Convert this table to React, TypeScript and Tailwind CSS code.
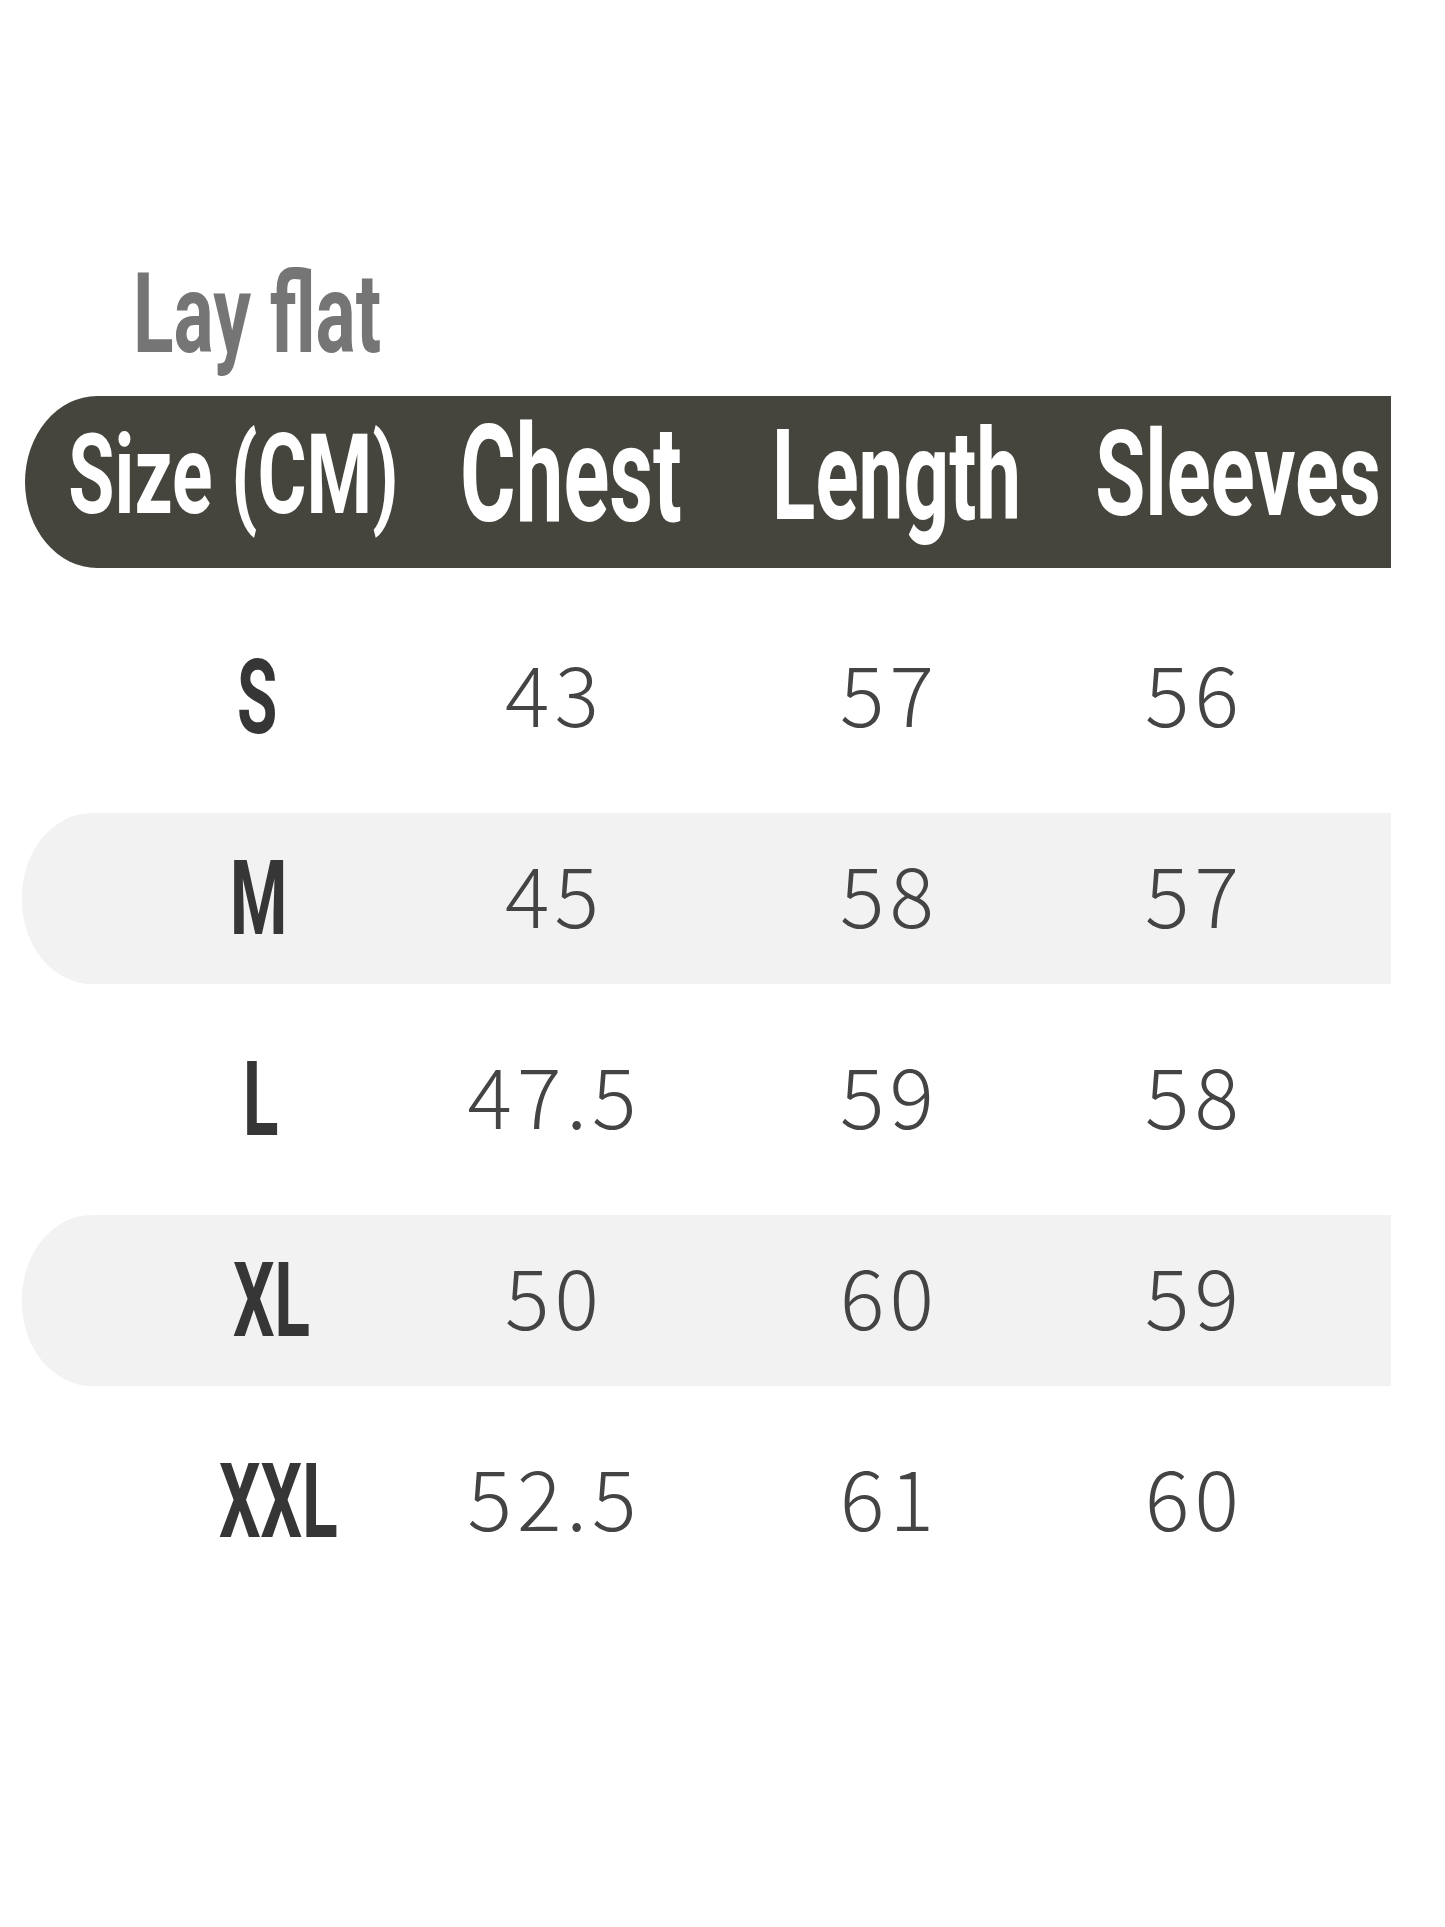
const HEAD_FONT = "font-['Roboto','Liberation_Sans',sans-serif] font-bold";
const NUM_FONT = "font-['Noto_Sans_CJK_SC','Noto_Sans',sans-serif] font-light";

interface Row {
  size: string;
  offset: string;
  chest: string;
  length: string;
  sleeves: string;
}

const ROWS: Row[] = [
  { size: "S", offset: "ml-[117px]", chest: "43", length: "57", sleeves: "56" },
  { size: "M", offset: "ml-[110px]", chest: "45", length: "58", sleeves: "57" },
  { size: "L", offset: "ml-[123px]", chest: "47.5", length: "59", sleeves: "58" },
  { size: "XL", offset: "ml-[113px]", chest: "50", length: "60", sleeves: "59" },
  { size: "XXL", offset: "ml-[99px]", chest: "52.5", length: "61", sleeves: "60" },
];

function HeadCell({ width, margin, size, scale, label }: { width: string; margin: string; size: string; scale: string; label: string }) {
  return (
    <div className={`${width} ${margin} flex justify-center shrink-0`}>
      <span className={`${HEAD_FONT} ${size} ${scale} inline-block leading-none whitespace-nowrap text-white`}>{label}</span>
    </div>
  );
}

export default function App() {
  return (
    <div className="w-[1445px] h-[1927px] bg-white overflow-hidden">
      {/* title */}
      <div className="pt-[258px] pl-[133px]">
        <span className={`${HEAD_FONT} inline-block origin-left scale-x-[0.67] text-[112px] leading-none text-[#757575] whitespace-nowrap`}>
          Lay flat
        </span>
      </div>

      {/* header bar */}
      <div className="mt-[26px] ml-[25px] w-[1366px] h-[172px] bg-[#45443d] rounded-l-[72px_86px] flex items-center pb-[14px]">
        <HeadCell width="w-[326px]" margin="ml-[45px]" size="text-[112px]" scale="scale-x-[0.67]" label="Size (CM)" />
        <HeadCell width="w-[219px]" margin="ml-[65px]" size="text-[135px]" scale="scale-x-[0.63]" label="Chest" />
        <HeadCell width="w-[246px]" margin="ml-[94px]" size="text-[127px]" scale="scale-x-[0.63]" label="Length" />
        <HeadCell width="w-[282px]" margin="ml-[77px]" size="text-[118px]" scale="scale-x-[0.69]" label="Sleeves" />
      </div>

      {/* rows */}
      <div className="mt-[29px]">
        {ROWS.map((r, i) => (
          <div key={r.size} className="h-[201px] flex items-center">
            <div
              className={`ml-[22px] w-[1369px] h-[171px] rounded-l-[70px_84px] grid grid-cols-[288px_288px_382px_228px] items-center pl-[98px] ${
                i % 2 === 1 ? "bg-[#f2f2f2]" : "bg-white"
              }`}
            >
              <div className="flex">
                <span className={`${HEAD_FONT} ${r.offset} inline-block origin-left scale-x-[0.63] text-[104px] leading-none text-[#363636]`}>
                  {r.size}
                </span>
              </div>
              {[r.chest, r.length, r.sleeves].map((v, j) => (
                <div key={j} className="flex justify-center pb-[12px] pl-[5px]">
                  <span className={`${NUM_FONT} text-[83px] leading-none tracking-[5px] text-[#444444] whitespace-nowrap`}>{v}</span>
                </div>
              ))}
            </div>
          </div>
        ))}
      </div>
    </div>
  );
}
